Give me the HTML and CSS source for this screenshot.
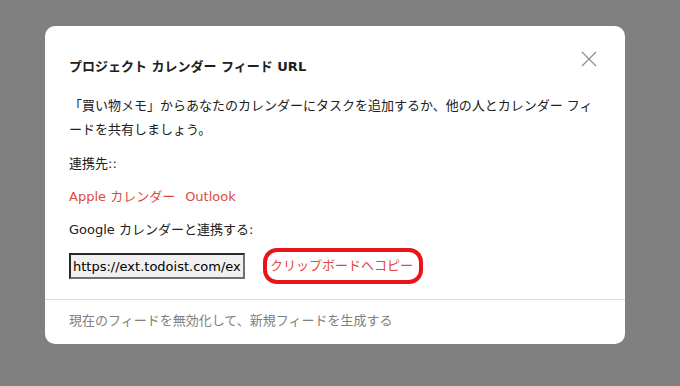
FILE: index.html
```html
<!DOCTYPE html>
<html lang="ja">
<head>
<meta charset="utf-8">
<link rel="stylesheet" href="styles.css">
</head>
<body>
<div class="modal">
  <div class="header">
    <h2 class="title">プロジェクト カレンダー フィード URL</h2>
    <button class="close" aria-label="閉じる">
      <svg width="16" height="16" viewBox="0 0 16 16"><path d="M1 1L15 15M15 1L1 15" stroke="#8a8a8a" stroke-width="1.1" fill="none"/></svg>
    </button>
  </div>
  <div class="body">
    <p class="desc">「買い物メモ」からあなたのカレンダーにタスクを追加するか、他の人とカレンダー フィードを共有しましょう。</p>
    <p class="line">連携先::</p>
    <p class="line links"><a class="link" href="#">Apple カレンダー</a><a class="link" href="#">Outlook</a></p>
    <p class="line">Google カレンダーと連携する:</p>
    <div class="copyrow">
      <input class="url" type="text" value="https://ext.todoist.com/export/ics/" readonly>
      <a class="copy" href="#">クリップボードへコピー</a>
    </div>
  </div>
  <div class="footer">
    <a class="regen" href="#">現在のフィードを無効化して、新規フィードを生成する</a>
  </div>
</div>
</body>
</html>
```

FILE: styles.css
```css
html, body {
  margin: 0;
  padding: 0;
  background: #808080;
  height: 100%;
}
body {
  font-family: "DejaVu Sans", "Noto Sans CJK JP", sans-serif;
  font-size: 13px;
  color: #202020;
  padding: 26px 0 0 45px;
  box-sizing: border-box;
}
.modal {
  position: relative;
  width: 580px;
  height: 318px;
  background: #fff;
  border-radius: 10px;
  display: flex;
  flex-direction: column;
  box-sizing: border-box;
}
.header {
  padding: 29px 24px 0 24px;
}
.title {
  margin: 0;
  font-size: 13px;
  font-weight: bold;
  line-height: 24px;
}
.close {
  position: absolute;
  top: 24px;
  right: 27px;
  width: 18px;
  height: 18px;
  padding: 1px;
  border: 0;
  background: none;
  display: flex;
  align-items: center;
  justify-content: center;
}
.body {
  padding: 15px 24px 0 24px;
  display: flex;
  flex-direction: column;
}
.desc {
  margin: 0;
  line-height: 24px;
  width: 534px;
}
.line {
  margin: 10px 0 0 0;
  line-height: 24px;
}
.links {
  margin-top: 9px;
  display: flex;
  gap: 10px;
}
.link, .copy {
  color: #dc4c3e;
  text-decoration: none;
}
.links + .line {
  margin-top: 9px;
}
.copyrow {
  margin-top: 6px;
  display: flex;
  align-items: center;
  gap: 18px;
  height: 36px;
}
.url {
  width: 176px;
  height: 26px;
  box-sizing: border-box;
  border: 2px solid;
  border-color: #2a2a2a #707070 #707070 #2a2a2a;
  background: #f0f0f0;
  font-family: "DejaVu Sans", sans-serif;
  font-size: 13px;
  color: #000;
  padding: 0 2px;
  margin: 0;
}
.copy {
  width: 160px;
  height: 36px;
  box-sizing: border-box;
  border: 4px solid #e8141c;
  border-radius: 14px;
  display: flex;
  align-items: center;
  padding-left: 3px;
  line-height: 24px;
}
.footer {
  margin-top: 15px;
  border-top: 1px solid #dddddd;
  padding: 9px 24px 0 24px;
  line-height: 24px;
}
.regen {
  color: #808080;
  text-decoration: none;
}
```
